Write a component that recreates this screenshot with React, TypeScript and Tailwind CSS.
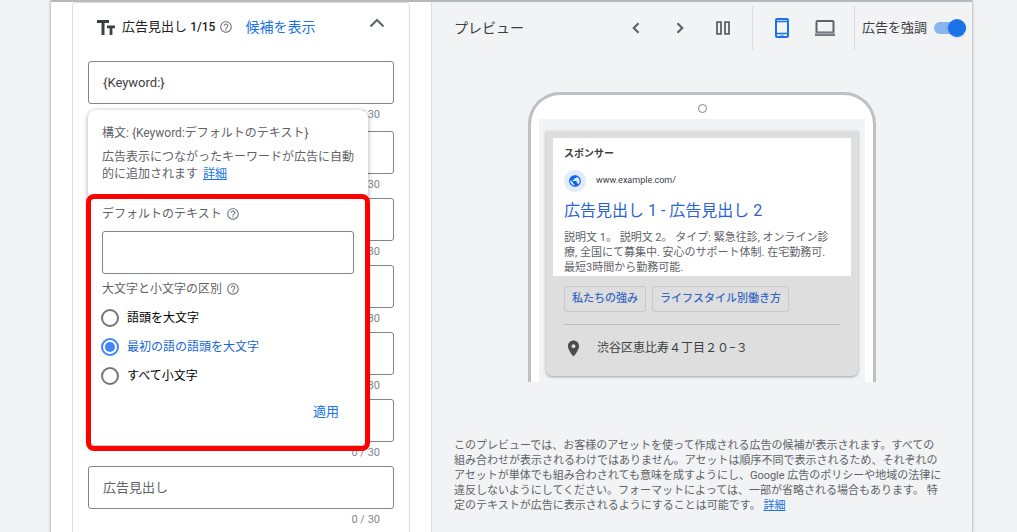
import { useState } from 'react';
import { MdHelpOutline, MdLocationOn, MdPublic } from 'react-icons/md';

const CASE_OPTIONS = ['語頭を大文字', '最初の語の語頭を大文字', 'すべて小文字'];
const EXTRA_HEADLINES = [2, 3, 4, 5, 6, 7];
const SITELINKS = ['私たちの強み', 'ライフスタイル別働き方'];

function HelpButton({ label }: { label: string }) {
  return (
    <button type="button" aria-label={label} className="text-[#757a80]">
      <MdHelpOutline size={14} />
    </button>
  );
}

function HeadlineField({ index, value }: { index: number; value?: string }) {
  return (
    <div>
      <input
        type="text"
        aria-label={`広告見出し ${index}`}
        placeholder="広告見出し"
        defaultValue={value}
        className="block h-[43px] w-full rounded-[3px] border border-[#80868b] bg-white px-3.5 text-[13px] text-[#3c4043] placeholder:text-[#5f6368]"
      />
      <div className="h-6 pr-3.5 pt-[3px] text-right text-[11px] leading-4 text-[#80868b]">0 / 30</div>
    </div>
  );
}

function KeywordPopup() {
  const [selected, setSelected] = useState(1);

  return (
    <div className="absolute left-0 top-[49px] z-10 w-[280px] rounded-lg bg-white px-3.5 pb-[23px] pt-[13px] text-xs text-[#5f6368] shadow-[0_1px_5px_rgba(0,0,0,0.35)]">
      <p className="leading-5">構文: {'{Keyword:デフォルトのテキスト}'}</p>
      <p className="mt-1.5 whitespace-nowrap leading-[17px]">
        広告表示につながったキーワードが広告に自動
        <br />
        的に追加されます{' '}
        <a href="#keyword-help" className="ml-0.5 text-[#1a73e8] underline">詳細</a>
      </p>

      <div className="mt-[21px] flex h-5 items-center gap-1">
        <label htmlFor="default-text">デフォルトのテキスト</label>
        <HelpButton label="デフォルトのテキストのヘルプ" />
      </div>
      <input
        id="default-text"
        type="text"
        className="mt-[7px] block h-[43px] w-full rounded-[3px] border border-[#80868b] px-3 text-[13px] text-[#3c4043]"
      />

      <fieldset className="mt-[5px]">
        <legend className="flex h-5 items-center gap-1">
          大文字と小文字の区別
          <HelpButton label="大文字と小文字の区別のヘルプ" />
        </legend>
        <div className="mt-[9px] flex flex-col gap-[9px]">
          {CASE_OPTIONS.map((option, i) => (
            <label
              key={option}
              className={`flex h-5 items-center gap-2 ${selected === i ? 'text-[#1967d2]' : 'text-black'}`}
            >
              <input
                type="radio"
                name="letter-case"
                checked={selected === i}
                onChange={() => setSelected(i)}
                className="-ml-px grid size-[18px] appearance-none place-items-center rounded-full border-2 border-[#757575] before:size-2.5 before:rounded-full checked:border-[#4285f4] checked:before:bg-[#4285f4]"
              />
              {option}
            </label>
          ))}
        </div>
      </fieldset>

      <div className="mt-4 flex justify-end pr-[15px]">
        <button type="button" className="h-5 text-[13px] leading-5 text-[#1a73e8]">適用</button>
      </div>

      {/* highlight frame */}
      <div className="pointer-events-none absolute -bottom-1.5 -left-0.5 -right-0.5 top-[84px] rounded-lg border-[5px] border-[#ff0000]" />
    </div>
  );
}

function HeadlineEditor() {
  return (
    <section className="w-[381px] shrink-0 border-r border-[#dadce0] bg-white px-[21px]">
      <div className="h-full min-h-screen rounded-t border border-[#dadce0] px-[15px]">
        <header className="flex h-12 items-center pl-[9px] pr-[9px]">
          <svg width="18" height="15" viewBox="0 0 18 15" fill="#3c4043">
            <path d="M0 0h12v3H7.500v12h-3V3H0zM10 5.500h8v2.800h-2.600V15h-2.800V8.300H10z" />
          </svg>
          <h2 className="ml-[7px] text-[13px] text-[#202124]">
            広告見出し <span className="text-xs font-medium">1/15</span>
          </h2>
          <span className="ml-1 flex">
            <HelpButton label="広告見出しのヘルプ" />
          </span>
          <button type="button" className="ml-3 text-sm text-[#1a73e8]">候補を表示</button>
          <button type="button" aria-label="折りたたむ" className="mb-2 ml-auto text-[#5f6368]">
            <svg width="16" height="16" viewBox="0 0 16 16" fill="none" stroke="currentColor" strokeWidth="2">
              <path d="M1.5 11.5 8 5l6.5 6.5" />
            </svg>
          </button>
        </header>

        <div className="pt-2.5">
          <div className="relative mb-[3px]">
            <HeadlineField index={1} value="{Keyword:}" />
            <KeywordPopup />
          </div>
          {EXTRA_HEADLINES.map((n) => (
            <HeadlineField key={n} index={n} />
          ))}
        </div>
      </div>
    </section>
  );
}

function PreviewToolbar() {
  return (
    <header className="flex h-[52px] items-center pl-[22px] pr-1.5 text-[#5f6368]">
      <h2 className="text-sm text-[#3c4043]">プレビュー</h2>
      <div className="ml-auto flex items-center">
        <button type="button" aria-label="前へ">
          <svg width="22" height="22" viewBox="0 0 22 22" fill="none" stroke="currentColor" strokeWidth="2.2">
            <path d="M13.5 6.300 8.800 11l4.700 4.700" />
          </svg>
        </button>
        <button type="button" aria-label="次へ" className="ml-[22px]">
          <svg width="22" height="22" viewBox="0 0 22 22" fill="none" stroke="currentColor" strokeWidth="2.2">
            <path d="M8.500 6.300 13.200 11l-4.700 4.700" />
          </svg>
        </button>
        <button type="button" aria-label="並べて表示" className="ml-[25px]">
          <svg width="14" height="14" viewBox="0 0 14 14" fill="none" stroke="currentColor" strokeWidth="1.8">
            <path d="M1 1.2h4v11.6H1zM9 1.2h4v11.6H9z" />
          </svg>
        </button>
        <span className="ml-[22px] h-11 w-px bg-[#dadce0]" />
        <button type="button" aria-label="モバイル" className="ml-[22px] text-[#1a73e8]">
          <svg width="14" height="20" viewBox="0 0 14 20">
            <rect x="1" y="1" width="12" height="18" rx="1.2" fill="none" stroke="currentColor" strokeWidth="2" />
            <path d="M1 3.5h12M1 15.5h12" stroke="currentColor" strokeWidth="1.4" />
            <path d="M5 17.2h4" stroke="#8ab4f8" strokeWidth="1.5" />
          </svg>
        </button>
        <button type="button" aria-label="パソコン" className="ml-[25px]">
          <svg width="22" height="16" viewBox="0 0 22 16">
            <rect x="2.5" y="1" width="17" height="11.5" rx="1" fill="none" stroke="currentColor" strokeWidth="2" />
            <path d="M1 12.5h20v3H1z" fill="#9aa0a6" />
            <path d="M1 15.2h20" stroke="currentColor" strokeWidth="1.2" />
          </svg>
        </button>
        <span className="ml-[18px] h-11 w-px bg-[#dadce0]" />
        <label className="ml-[7px] flex items-center gap-[7px] text-[13px] text-[#3c4043]">
          広告を強調
          <input
            type="checkbox"
            role="switch"
            defaultChecked
            className="relative h-3 w-8 appearance-none rounded-full bg-[#bdc1c6] before:absolute before:-top-[3px] before:left-0 before:size-[18px] before:rounded-full before:bg-white before:shadow checked:bg-[#8ab4f0] checked:before:left-3.5 checked:before:bg-[#1a73e8]"
          />
        </label>
      </div>
    </header>
  );
}

function AdPreview() {
  return (
    <div className="mx-auto mt-[38px] w-[348px] rounded-t-[32px] border-x-[3px] border-t-[3px] border-[#bdc1c6] bg-white px-2">
      <div className="flex h-6 items-center justify-center pt-0.5">
        <span className="size-[9px] rounded-full border border-[#80868b]" />
      </div>
      <div className="bg-[#f1f3f4] px-[7px] pb-1.5 pt-3">
        <article className="rounded-b-md bg-[#dedede] px-[7px] pb-[18px] pt-[7px] shadow-[0_1px_3px_rgba(0,0,0,0.35)]">
          <div className="bg-white px-[11px] pb-px pt-2">
            <p className="text-[10px] font-bold leading-4 text-[#3c4043]">スポンサー</p>
            <div className="mt-2 flex items-center gap-2.5">
              <span className="flex size-[22px] items-center justify-center rounded-full bg-[#e1ebfd] text-[#0b62ee]">
                <MdPublic size={14} />
              </span>
              <span className="text-[9px] text-[#3c4043]">www.example.com/</span>
            </div>
            <h3 className="mt-2 text-base leading-[22px] text-[#2a63d4]">広告見出し 1 - 広告見出し 2</h3>
            <p className="mt-2 whitespace-nowrap text-[11px] leading-[15px] text-[#5f6368]">
              説明文 1。 説明文 2。 タイプ: 緊急往診, オンライン診
              <br />
              療, 全国にて募集中. 安心のサポート体制. 在宅勤務可.
              <br />
              最短3時間から勤務可能.
            </p>
          </div>
          <div className="px-[11px]">
            <div className="mt-2.5 flex gap-1.5">
              {SITELINKS.map((name) => (
                <a
                  key={name}
                  href="#sitelink"
                  className="h-[26px] rounded-[3px] border border-[#c8c8c8] px-[7px] text-[11px] font-medium leading-6 text-[#3568c4]"
                >
                  {name}
                </a>
              ))}
            </div>
            <hr className="mt-3 border-[#bdbdbd]" />
            <div className="mt-[13px] flex h-5 items-center gap-3.5 text-xs text-[#3c4043]">
              <MdLocationOn size={19} className="text-[#4d4d4d]" />
              渋谷区恵比寿４丁目２０−３
            </div>
          </div>
        </article>
      </div>
    </div>
  );
}

function PreviewPane() {
  return (
    <section className="min-w-0 flex-1 bg-[#f1f3f4]">
      <PreviewToolbar />
      <AdPreview />
      <p className="mt-14 whitespace-nowrap pl-[22px] text-[11px] leading-[15px] text-[#5f6368]">
        このプレビューでは、お客様のアセットを使って作成される広告の候補が表示されます。すべての
        <br />
        組み合わせが表示されるわけではありません。アセットは順序不同で表示されるため、それぞれの
        <br />
        アセットが単体でも組み合わされても意味を成すようにし、Google 広告のポリシーや地域の法律に
        <br />
        違反しないようにしてください。フォーマットによっては、一部が省略される場合もあります。 特
        <br />
        定のテキストが広告に表示されるようにすることは可能です。{' '}
        <a href="#preview-help" className="text-[#1a73e8] underline">詳細</a>
      </p>
    </section>
  );
}

export default function App() {
  return (
    <main className="h-screen overflow-hidden bg-[#f1f3f4] pl-[51px] pr-[45px] font-[Roboto,'Noto_Sans_CJK_JP',sans-serif]">
      <div className="flex min-h-full border-t-2 border-[#b8b8b8] shadow-[0_0_3px_rgba(0,0,0,0.4)]">
        <HeadlineEditor />
        <PreviewPane />
      </div>
    </main>
  );
}
